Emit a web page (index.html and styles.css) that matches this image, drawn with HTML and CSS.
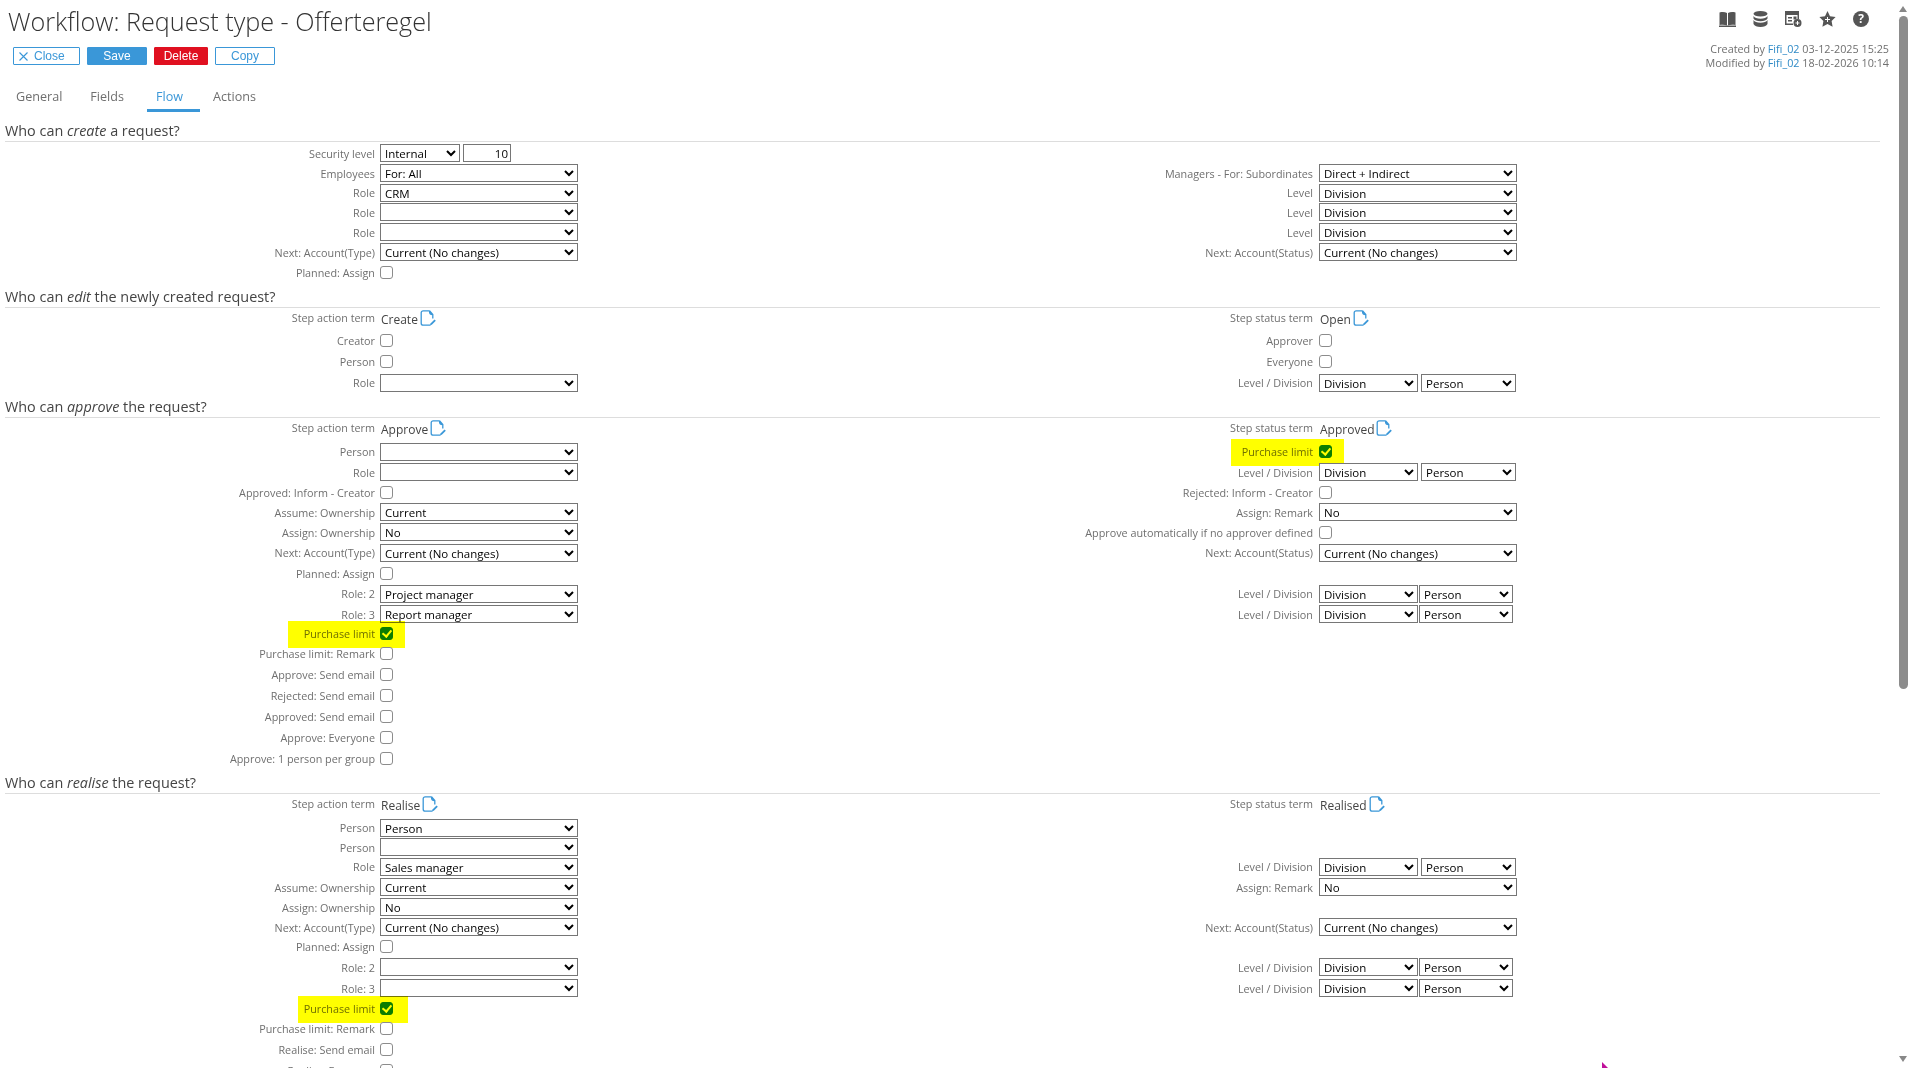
FILE: index.html
```html
<!DOCTYPE html>
<html lang="en">
<head>
  <meta charset="UTF-8" />
  <title>Workflow: Request type - Offerteregel</title>
  <link rel="stylesheet" href="styles.css">
</head>
<body>
<svg class="defs" width="0" height="0">
  <symbol id="term" viewBox="0 0 16 16">
    <path d="M9.500 .8H3.200C2 .8 1.200 1.600 1.200 2.800v10.400c0 1.200.8 2 2 2h7.300M9.500 .8c0 3 .6 3.600 3.300 3.700M9.500 .8l3.300 3.700v4" fill="none" stroke="#3a97d8" stroke-width="1.300"/>
    <path d="M10.500 13.500l4-4 1.300 1.300-4 4-1.800.5z" fill="#3a97d8"/>
  </symbol>
</svg>

<div class="page">
  <div class="content">
    <header class="top">
      <div>
        <h1>Workflow: Request type - Offerteregel</h1>
        <div class="buttons">
          <button class="btn btn-close"><svg width="9" height="9" viewBox="0 0 9 9"><path d="M.5 .5l8 8M8.500 .5l-8 8" stroke="#3a97d8" stroke-width="1.100"/></svg>Close</button>
          <button class="btn btn-save">Save</button>
          <button class="btn btn-delete">Delete</button>
          <button class="btn btn-copy">Copy</button>
        </div>
      </div>
      <div class="meta">
        <div class="icons">
          <svg width="17" height="16" viewBox="0 0 17 16"><path d="M.5 1.500C3 .8 6 .8 8 2v12.500C6 13.500 3 13.500.5 14zM16.500 1.500C14 .8 11 .8 9 2v12.500c2-1 5-1 7.500-.5z" fill="#555"/><path d="M0 14.500h17V16H0z" fill="#555"/></svg>
          <svg width="15" height="16" viewBox="0 0 15 16"><g fill="#555"><ellipse cx="7.500" cy="2.800" rx="7" ry="2.800"/><path d="M.5 5c1 2 3.500 2.700 7 2.700s6-.7 7-2.700v2.500c-1 2-3.500 2.700-7 2.700s-6-.7-7-2.700zM.5 9c1 2 3.500 2.700 7 2.700s6-.7 7-2.700v4c-1 2-3.500 3-7 3s-6-1-7-3z"/></g></svg>
          <svg width="17" height="16" viewBox="0 0 17 16"><path d="M0 0h14v8h-1.500V4h-11v8.500H8V14H0z" fill="#555"/><path d="M3 6h4v1.500H3zM3 9h4v1.500H3z" fill="#555"/><path d="M8.500 5.500h3v3h-3z" fill="#555"/><circle cx="12.500" cy="12" r="4" fill="#555"/><path d="M12 10h1v1.500h1.500v1H13V14h-1v-1.500h-1.500v-1H12z" fill="#fff"/></svg>
          <svg width="17" height="16" viewBox="0 0 17 16"><path d="M8.500 0l2.500 5.200 5.600.8-4 4 1 5.800-5.100-2.700-5.100 2.700 1-5.800-4-4 5.600-.8z" fill="#555"/><path d="M8 6h1v2h2v1H9v2H8V9H6V8h2z" fill="#fff"/></svg>
          <svg width="16" height="16" viewBox="0 0 16 16"><circle cx="8" cy="8" r="8" fill="#555"/><text x="8" y="12" text-anchor="middle" class="help">?</text></svg>
        </div>
        <div>Created by <a>Fifi_02</a> 03-12-2025 15:25</div>
        <div>Modified by <a>Fifi_02</a> 18-02-2026 10:14</div>
      </div>
    </header>

    <nav class="tabs">
      <span class="tab">General</span>
      <span class="tab">Fields</span>
      <span class="tab active">Flow</span>
      <span class="tab">Actions</span>
    </nav>

    <h2 class="first">Who can <em>create</em> a request?</h2>
    <div class="row">
      <div class="cell"><label>Security level</label><select class="w-sec"><option>Internal</option></select><input class="num" value="10"></div>
    </div>
    <div class="row">
      <div class="cell"><label>Employees</label><select><option>For: All</option></select></div>
      <div class="cell"><label>Managers - For: Subordinates</label><select><option>Direct + Indirect</option></select></div>
    </div>
    <div class="row row-19">
      <div class="cell"><label>Role</label><select><option>CRM</option></select></div>
      <div class="cell"><label>Level</label><select><option>Division</option></select></div>
    </div>
    <div class="row">
      <div class="cell"><label>Role</label><select><option></option></select></div>
      <div class="cell"><label>Level</label><select><option>Division</option></select></div>
    </div>
    <div class="row">
      <div class="cell"><label>Role</label><select><option></option></select></div>
      <div class="cell"><label>Level</label><select><option>Division</option></select></div>
    </div>
    <div class="row">
      <div class="cell"><label>Next: Account(Type)</label><select><option>Current (No changes)</option></select></div>
      <div class="cell"><label>Next: Account(Status)</label><select><option>Current (No changes)</option></select></div>
    </div>
    <div class="row row-21">
      <div class="cell"><label>Planned: Assign</label><input type="checkbox"></div>
    </div>

    <h2>Who can <em>edit</em> the newly created request?</h2>
    <div class="row row-22">
      <div class="cell"><label class="up">Step action term</label><span class="term">Create<svg width="16" height="16"><use href="#term"/></svg></span></div>
      <div class="cell"><label class="up">Step status term</label><span class="term">Open<svg width="16" height="16"><use href="#term"/></svg></span></div>
    </div>
    <div class="row row-21">
      <div class="cell"><label>Creator</label><input type="checkbox"></div>
      <div class="cell"><label>Approver</label><input type="checkbox"></div>
    </div>
    <div class="row row-21">
      <div class="cell"><label>Person</label><input type="checkbox"></div>
      <div class="cell"><label>Everyone</label><input type="checkbox"></div>
    </div>
    <div class="row row-21">
      <div class="cell"><label>Role</label><select><option></option></select></div>
      <div class="cell"><label>Level / Division</label><select class="w-div"><option>Division</option></select><select class="w-per"><option>Person</option></select></div>
    </div>

    <h2>Who can <em>approve</em> the request?</h2>
    <div class="row row-23">
      <div class="cell"><label class="up">Step action term</label><span class="term">Approve<svg width="16" height="16"><use href="#term"/></svg></span></div>
      <div class="cell"><label class="up">Step status term</label><span class="term">Approved<svg width="16" height="16"><use href="#term"/></svg></span></div>
    </div>
    <div class="row row-21">
      <div class="cell"><label>Person</label><select><option></option></select></div>
      <div class="cell"><label>Purchase limit</label><input type="checkbox" checked><span class="mark mark-right"></span></div>
    </div>
    <div class="row">
      <div class="cell"><label>Role</label><select><option></option></select></div>
      <div class="cell"><label>Level / Division</label><select class="w-div"><option>Division</option></select><select class="w-per"><option>Person</option></select></div>
    </div>
    <div class="row">
      <div class="cell"><label>Approved: Inform - Creator</label><input type="checkbox"></div>
      <div class="cell"><label>Rejected: Inform - Creator</label><input type="checkbox"></div>
    </div>
    <div class="row">
      <div class="cell"><label>Assume: Ownership</label><select><option>Current</option></select></div>
      <div class="cell"><label>Assign: Remark</label><select><option>No</option></select></div>
    </div>
    <div class="row">
      <div class="cell"><label>Assign: Ownership</label><select><option>No</option></select></div>
      <div class="cell"><label>Approve automatically if no approver defined</label><input type="checkbox"></div>
    </div>
    <div class="row row-21">
      <div class="cell"><label>Next: Account(Type)</label><select><option>Current (No changes)</option></select></div>
      <div class="cell"><label>Next: Account(Status)</label><select><option>Current (No changes)</option></select></div>
    </div>
    <div class="row">
      <div class="cell"><label>Planned: Assign</label><input type="checkbox"></div>
    </div>
    <div class="row row-21">
      <div class="cell"><label>Role: 2</label><select><option>Project manager</option></select></div>
      <div class="cell"><label>Level / Division</label><select class="w-div"><option>Division</option></select><select class="w-per-s"><option>Person</option></select></div>
    </div>
    <div class="row">
      <div class="cell"><label>Role: 3</label><select><option>Report manager</option></select></div>
      <div class="cell"><label>Level / Division</label><select class="w-div"><option>Division</option></select><select class="w-per-s"><option>Person</option></select></div>
    </div>
    <div class="row row-19">
      <div class="cell"><label>Purchase limit</label><input type="checkbox" checked><span class="mark mark-left"></span></div>
    </div>
    <div class="row row-21">
      <div class="cell"><label>Purchase limit: Remark</label><input type="checkbox"></div>
    </div>
    <div class="row row-21">
      <div class="cell"><label>Approve: Send email</label><input type="checkbox"></div>
    </div>
    <div class="row row-21">
      <div class="cell"><label>Rejected: Send email</label><input type="checkbox"></div>
    </div>
    <div class="row row-21">
      <div class="cell"><label>Approved: Send email</label><input type="checkbox"></div>
    </div>
    <div class="row row-21">
      <div class="cell"><label>Approve: Everyone</label><input type="checkbox"></div>
    </div>
    <div class="row row-21">
      <div class="cell"><label>Approve: 1 person per group</label><input type="checkbox"></div>
    </div>

    <h2>Who can <em>realise</em> the request?</h2>
    <div class="row row-23">
      <div class="cell"><label class="up">Step action term</label><span class="term">Realise<svg width="16" height="16"><use href="#term"/></svg></span></div>
      <div class="cell"><label class="up">Step status term</label><span class="term">Realised<svg width="16" height="16"><use href="#term"/></svg></span></div>
    </div>
    <div class="row row-21">
      <div class="cell"><label>Person</label><select><option>Person</option></select></div>
    </div>
    <div class="row row-18">
      <div class="cell"><label>Person</label><select><option></option></select></div>
    </div>
    <div class="row row-21">
      <div class="cell"><label>Role</label><select><option>Sales manager</option></select></div>
      <div class="cell"><label>Level / Division</label><select class="w-div"><option>Division</option></select><select class="w-per"><option>Person</option></select></div>
    </div>
    <div class="row">
      <div class="cell"><label>Assume: Ownership</label><select><option>Current</option></select></div>
      <div class="cell"><label>Assign: Remark</label><select><option>No</option></select></div>
    </div>
    <div class="row">
      <div class="cell"><label>Assign: Ownership</label><select><option>No</option></select></div>
    </div>
    <div class="row">
      <div class="cell"><label>Next: Account(Type)</label><select><option>Current (No changes)</option></select></div>
      <div class="cell"><label>Next: Account(Status)</label><select><option>Current (No changes)</option></select></div>
    </div>
    <div class="row row-19">
      <div class="cell"><label>Planned: Assign</label><input type="checkbox"></div>
    </div>
    <div class="row row-22">
      <div class="cell"><label>Role: 2</label><select><option></option></select></div>
      <div class="cell"><label>Level / Division</label><select class="w-div"><option>Division</option></select><select class="w-per-s"><option>Person</option></select></div>
    </div>
    <div class="row">
      <div class="cell"><label>Role: 3</label><select><option></option></select></div>
      <div class="cell"><label>Level / Division</label><select class="w-div"><option>Division</option></select><select class="w-per-s"><option>Person</option></select></div>
    </div>
    <div class="row">
      <div class="cell"><label>Purchase limit</label><input type="checkbox" checked><span class="mark mark-low"></span></div>
    </div>
    <div class="row row-21">
      <div class="cell"><label>Purchase limit: Remark</label><input type="checkbox"></div>
    </div>
    <div class="row row-21">
      <div class="cell"><label>Realise: Send email</label><input type="checkbox"></div>
    </div>
    <div class="row row-21">
      <div class="cell"><label>Realise: Everyone</label><input type="checkbox"></div>
    </div>
  </div>

  <div class="scrollbar">
    <span class="arrow-up"></span>
    <span class="thumb"></span>
    <span class="arrow-down"></span>
  </div>
</div>

<svg class="cursor" width="8" height="6" viewBox="0 0 8 6"><path d="M1 0v6h6z" fill="#c0109a"/></svg>
</body>
</html>
```

FILE: styles.css
```css
html, body {
  margin: 0;
  height: 100%;
  overflow: hidden;
  background: #fff;
}

body {
  font-family: "Open Sans", sans-serif;
  font-size: 10.8px;
  color: #6f6f6f;
}

.defs {
  display: block;
  height: 0;
}

.page {
  display: flex;
  height: 1068px;
}

.content {
  flex: 1;
  overflow: hidden;
  padding-right: 17px;
}

/* header */
.top {
  display: flex;
  justify-content: space-between;
  height: 85px;
}

h1 {
  margin: 5px 0 0 8px;
  font-size: 25.200px;
  font-weight: 300;
  line-height: 32px;
  color: #333;
}

.buttons {
  display: flex;
  gap: 7px;
  margin: 10px 0 0 13px;
}

.btn {
  height: 18px;
  padding: 0;
  border: 1px solid #3a97d8;
  border-radius: 1px;
  background: #fff;
  color: #3a97d8;
  font-family: "Liberation Sans", sans-serif;
  font-size: 12px;
  line-height: 16px;
}

.btn-close {
  display: flex;
  align-items: center;
  gap: 6px;
  width: 67px;
  padding-left: 5px;
}

.btn-copy { width: 60px; }

.btn-save {
  width: 60px;
  background: #3a97d8;
  color: #fff;
}

.btn-delete {
  width: 54px;
  border-color: #e01020;
  background: #e01020;
  color: #fff;
}

.meta {
  margin: 11px -9px 0 0;
  text-align: right;
  line-height: 14px;
}

.meta a { color: #2f8ac6; }

.icons {
  display: flex;
  justify-content: flex-end;
  align-items: center;
  gap: 17px;
  height: 16px;
  margin: 0 20px 15px 0;
}

.help {
  font-size: 12px;
  font-weight: 700;
  fill: #fff;
}

/* tabs */
.tabs {
  display: flex;
  margin-left: 6px;
  height: 27px;
}

.tab {
  padding: 3px 10px 0;
  margin-right: 8px;
  font-size: 12.600px;
  color: #6f6f6f;
}

.tab:nth-child(2) { margin-right: 13px; }

.tab.active {
  box-sizing: border-box;
  height: 27px;
  padding: 3px 17px 0 9px;
  margin-right: 3px;
  color: #3a97d8;
  border-bottom: 3px solid #3a97d8;
}

/* sections */
h2 {
  margin: 0 0 0 5px;
  height: 24px;
  border-bottom: 1px solid #ddd;
  font-size: 14.400px;
  font-weight: 400;
  line-height: 27px;
  color: #444;
}

h2.first {
  margin-top: 5px;
  margin-bottom: 1px;
}

.row {
  display: flex;
  height: 20px;
  align-items: center;
}

.row-23 { height: 23px; }
.row-22 { height: 22px; }
.row-21 { height: 21px; }
.row-19 { height: 19px; }
.row-18 { height: 18px; }

.cell {
  position: relative;
  display: flex;
  align-items: center;
  width: 939px;
  flex: none;
}

.cell label {
  width: 374px;
  margin-right: 6px;
  flex: none;
  text-align: right;
  white-space: nowrap;
}

.cell:first-child label {
  width: 375px;
  margin-right: 5px;
}

.cell label.up { margin-bottom: 4px; }

select {
  width: 198px;
  height: 18px;
  padding: 0;
  border: 1px solid #767676;
  border-radius: 0;
  background: #fff;
  color: #000;
  font-family: "Open Sans", sans-serif;
  font-size: 11.500px;
}

select.w-sec { width: 80px; }
select.w-div { width: 99px; }
select.w-per { width: 95px; margin-left: 3px; }
select.w-per-s { width: 94px; margin-left: 1px; }

.num {
  width: 48px;
  height: 18px;
  box-sizing: border-box;
  margin-left: 3px;
  padding: 0 2px;
  border: 1px solid #767676;
  text-align: right;
  font-family: "Open Sans", sans-serif;
  font-size: 11.500px;
  color: #000;
}

input[type="checkbox"] {
  appearance: none;
  position: relative;
  box-sizing: border-box;
  width: 13px;
  height: 13px;
  margin: 0;
  border: 1px solid #8c8c8c;
  border-radius: 3px;
  background: #fff;
}

input[type="checkbox"]:checked {
  border-color: #0b7d0b;
  background: #0b7d0b;
}

input[type="checkbox"]:checked::after {
  content: "";
  position: absolute;
  left: 3px;
  top: 0;
  width: 4px;
  height: 7px;
  border: solid #fff;
  border-width: 0 2px 2px 0;
  transform: rotate(40deg);
}

.term {
  display: flex;
  align-items: center;
  gap: 2px;
  margin-left: 1px;
  font-size: 12px;
  color: #444;
}

.term svg { margin-top: -3px; }

/* marker over the scanned label */
.mark {
  position: absolute;
  top: -5px;
  height: 27px;
  background: #ffff00;
  mix-blend-mode: multiply;
}

.mark-left { left: 288px; width: 117px; }
.mark-low { left: 298px; width: 110px; }
.mark-right { left: 292px; width: 113px; }

/* scrollbar */
.scrollbar {
  display: flex;
  flex-direction: column;
  align-items: center;
  width: 12px;
  margin-right: 3px;
  flex: none;
}

.arrow-up {
  margin-top: 6px;
  border: 4.500px solid transparent;
  border-top: 0;
  border-bottom: 6px solid #888;
}

.thumb {
  width: 9px;
  height: 673px;
  margin-top: 4px;
  border-radius: 5px;
  background: #8c8c8c;
}

.arrow-down {
  margin-top: auto;
  margin-bottom: 6px;
  border: 4px solid transparent;
  border-bottom: 0;
  border-top: 6px solid #888;
}

.cursor {
  position: absolute;
  left: 1601px;
  top: 1062px;
}
```
